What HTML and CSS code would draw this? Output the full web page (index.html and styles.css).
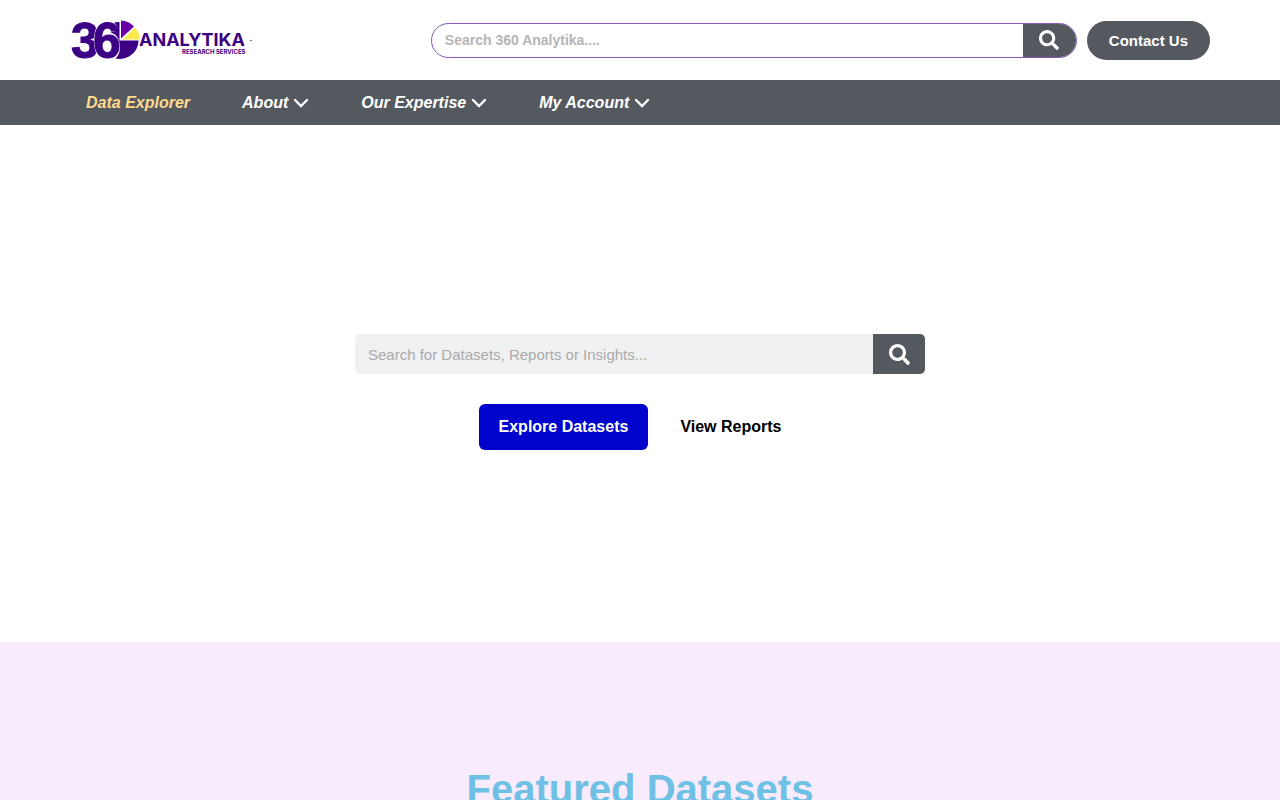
FILE: index.html
```html
<!DOCTYPE html>
<html lang="en">
<head>
  <meta charset="UTF-8" />
  <meta name="viewport" content="width=device-width, initial-scale=1.0"/>
  <title>360 Analytika</title>
  <link rel="stylesheet" href="styles.css">
</head>
<body>
  <header class="site-header">
    <div class="container header-row">
      <a class="logo" href="#" aria-label="360 Analytika Research Services">
        <svg width="184" height="44" viewBox="70 18 184 44">
          <text class="logo-digits" x="71" y="58">3</text>
          <!-- pie chart used as the zero -->
          <path fill="#3b0083" d="M119.500 22V40.500H138.500A19 18.500 0 0 1 110 56.500V24A19 18.500 0 0 1 119.500 22z"/>
          <path fill="#fff" d="M107 20C98 20 94 29 94 41S99 61 107 61C115 61 120 56 120 47C120 39 116 33 110 33L118 30C117 24 113 20 107 20z"/>
          <path fill="#6a00a8" d="M121 20.500A19 19 0 0 1 134 26.500L121 38.500z"/>
          <path fill="#fbe94e" d="M135 27.500A19 19 0 0 1 140 39.500H122.500z"/>
          <text class="logo-digits" x="93" y="58">6</text>
          <text class="logo-name" x="139" y="46">ANALYTIKA</text>
          <text class="logo-tag" x="182" y="54">RESEARCH SERVICES</text>
          <path fill="#777" d="M250 40h2v1h-2z"/>
        </svg>
      </a>
      <form class="search header-search">
        <input type="search" placeholder="Search 360 Analytika...." aria-label="Search 360 Analytika" />
        <button type="submit" aria-label="Search">
          <svg width="20" height="20" viewBox="0 0 512 512"><path fill="currentColor" d="M505 442.700L405.300 343c-4.500-4.500-10.600-7-17-7H372c27.600-35.300 44-79.700 44-128C416 93.100 322.900 0 208 0S0 93.100 0 208s93.100 208 208 208c48.300 0 92.700-16.400 128-44v16.300c0 6.400 2.500 12.500 7 17l99.700 99.700c9.400 9.400 24.600 9.400 33.900 0l28.300-28.300c9.400-9.400 9.400-24.600.1-34zM208 336c-70.700 0-128-57.200-128-128 0-70.700 57.200-128 128-128 70.700 0 128 57.200 128 128 0 70.700-57.200 128-128 128z"/></svg>
        </button>
      </form>
      <a class="contact-btn" href="#">Contact Us</a>
    </div>
  </header>

  <nav class="main-nav">
    <div class="container nav-row">
      <a class="active" href="#">Data Explorer</a>
      <a href="#">About
        <svg width="16" height="16" viewBox="0 0 16 16"><path stroke-width="2.400" d="M2 5l6 6 6-6"/></svg>
      </a>
      <a href="#">Our Expertise
        <svg width="16" height="16" viewBox="0 0 16 16"><path stroke-width="2.400" d="M2 5l6 6 6-6"/></svg>
      </a>
      <a href="#">My Account
        <svg width="16" height="16" viewBox="0 0 16 16"><path stroke-width="2.400" d="M2 5l6 6 6-6"/></svg>
      </a>
    </div>
  </nav>

  <section class="hero">
    <form class="search hero-search">
      <input type="search" placeholder="Search for Datasets, Reports or Insights..." aria-label="Search datasets" />
      <button type="submit" aria-label="Search">
        <svg width="21" height="21" viewBox="0 0 512 512"><path fill="currentColor" d="M505 442.700L405.300 343c-4.500-4.500-10.600-7-17-7H372c27.600-35.300 44-79.700 44-128C416 93.100 322.900 0 208 0S0 93.100 0 208s93.100 208 208 208c48.300 0 92.700-16.400 128-44v16.300c0 6.400 2.500 12.500 7 17l99.700 99.700c9.400 9.400 24.600 9.400 33.900 0l28.300-28.300c9.400-9.400 9.400-24.600.1-34zM208 336c-70.700 0-128-57.200-128-128 0-70.700 57.200-128 128-128 70.700 0 128 57.200 128 128 0 70.700-57.200 128-128 128z"/></svg>
      </button>
    </form>
    <div class="hero-actions">
      <a class="btn btn-primary" href="#">Explore Datasets</a>
      <a class="btn" href="#">View Reports</a>
    </div>
  </section>

  <section class="featured">
    <h2>Featured Datasets</h2>
  </section>
</body>
</html>
```
FILE: styles.css
```css
* {
  box-sizing: border-box;
  margin: 0;
  padding: 0;
}

body {
  background: #fff;
  color: #000;
  font-family: "Liberation Sans", Arial, sans-serif;
  font-size: 16px;
}

a {
  text-decoration: none;
}

.container {
  width: 100%;
  max-width: 1140px;
  margin: 0 auto;
}

/* header */
.header-row {
  display: flex;
  align-items: center;
  gap: 10px;
  min-height: 80px;
}

.logo {
  flex: 1;
}

.logo svg {
  display: block;
  overflow: visible;
}

.logo-digits {
  font-family: "Liberation Sans", Arial, sans-serif;
  font-size: 50px;
  font-weight: bold;
  fill: #3b0083;
  stroke: #3b0083;
  stroke-width: 1px;
}

.logo-name {
  font-family: Inter, sans-serif;
  font-size: 18px;
  font-weight: 700;
  fill: #3b0083;
}

.logo-tag {
  font-family: Inter, sans-serif;
  font-size: 6px;
  font-weight: 700;
  fill: #3b0083;
}

.search {
  display: flex;
  overflow: hidden;
}

.search input {
  flex: 1;
  min-width: 0;
  padding: 0 13px;
  border: none;
  outline: none;
  background: transparent;
  font-family: inherit;
  font-size: 15px;
  appearance: none;
}

.search input::placeholder {
  color: #aaa;
}

.search button {
  display: flex;
  align-items: center;
  justify-content: center;
  width: 52px;
  border: none;
  background: #54595f;
  color: #fff;
  cursor: pointer;
}

.header-search {
  width: 57%;
  max-width: 646px;
  height: 35px;
  border: 1px solid #8557b5;
  border-radius: 18px;
}

.header-search input {
  font-size: 14px;
  font-weight: bold;
}

.header-search input::placeholder {
  color: #b5b5b5;
}

.header-search button {
  width: 53px;
}

.contact-btn {
  padding: 0 22px;
  border-radius: 20px;
  background: #54595f;
  color: #fff;
  font-size: 15px;
  font-weight: bold;
  line-height: 39px;
}

/* navigation */
.main-nav {
  background: #54595f;
}

.nav-row {
  display: flex;
  gap: 52px;
  min-height: 45px;
  padding: 0 16px;
}

.nav-row a {
  display: flex;
  align-items: center;
  gap: 5px;
  color: #fff;
  font-style: italic;
  font-weight: bold;
}

.nav-row .active {
  color: #ffda8f;
}

.nav-row svg {
  fill: none;
  stroke: currentColor;
  stroke-linecap: round;
}

/* hero */
.hero {
  padding: 209px 20px 192px;
}

.hero-search {
  max-width: 570px;
  height: 40px;
  margin: 0 auto 30px;
  border-radius: 5px;
  background: #f0f1f3;
}

.hero-actions {
  display: flex;
  justify-content: center;
  gap: 12px;
}

.btn {
  padding: 0 20px;
  border-radius: 6px;
  color: #000;
  font-weight: bold;
  line-height: 46px;
}

.btn-primary {
  background: #0003cc;
  color: #fff;
}

/* featured datasets */
.featured {
  padding: 127px 20px;
  background: #f8ebfe;
  text-align: center;
}

.featured h2 {
  color: #6ec1e4;
  font-size: 40px;
  line-height: 40px;
}
```
